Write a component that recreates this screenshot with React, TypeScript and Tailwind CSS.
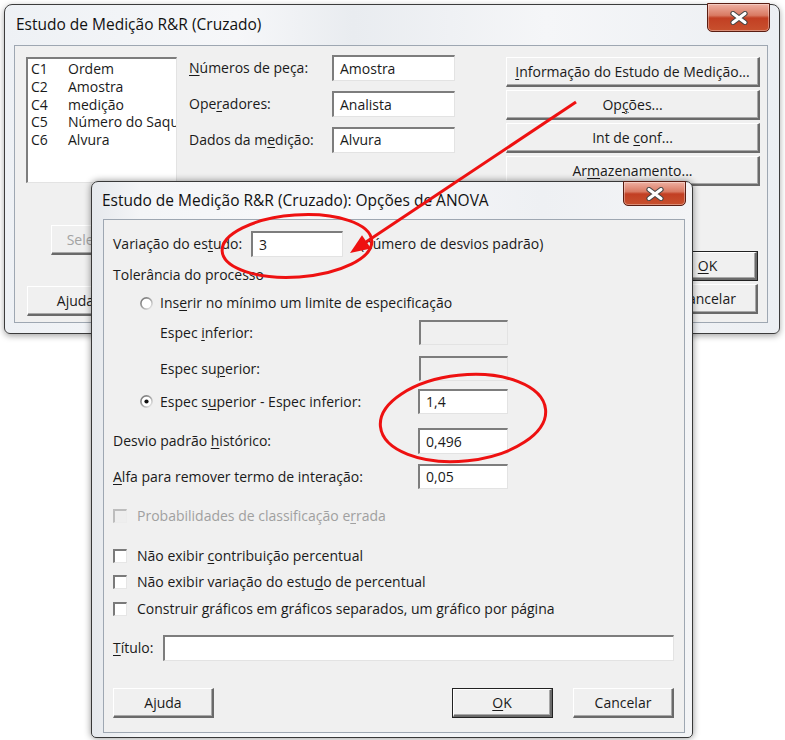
import React from "react";

type Kids = { children?: React.ReactNode };

// access-key underline, as in the classic Windows dialogs
function Key({ children }: Kids) {
  return <span className="underline decoration-1 underline-offset-[2px]">{children}</span>;
}

function TextBox({
  value = "",
  disabled = false,
  className = "",
}: {
  value?: string;
  disabled?: boolean;
  className?: string;
}) {
  return (
    <div
      className={`flex items-center border-t-2 border-l-2 border-r border-b border-t-[#7d7d7d] border-l-[#7d7d7d] border-r-[#e3e3e3] border-b-[#e3e3e3] pl-[6px] ${
        disabled ? "bg-[#f0f0f0]" : "bg-white"
      } ${className}`}
    >
      {value}
    </div>
  );
}

function Btn({
  children,
  isDefault = false,
  className = "",
}: Kids & { isDefault?: boolean; className?: string }) {
  return (
    <div className={`bg-[#f0f0f0] ${isDefault ? "border border-[#222]" : ""} ${className}`}>
      <div className="flex h-full w-full items-center justify-center border-t border-l border-r-2 border-b-2 border-t-white border-l-white border-r-[#6a6a6a] border-b-[#6a6a6a] shadow-[inset_-1px_-1px_0_#a8a8a8]">
        {children}
      </div>
    </div>
  );
}

function Check({ disabled = false }: { disabled?: boolean }) {
  return (
    <div
      className={`h-[14px] w-[14px] shrink-0 border-t-2 border-l-2 border-r border-b ${
        disabled
          ? "border-t-[#bdbdbd] border-l-[#bdbdbd] border-r-[#ececec] border-b-[#ececec] bg-[#eeeeee]"
          : "border-t-[#7a7a7a] border-l-[#7a7a7a] border-r-[#e6e6e6] border-b-[#e6e6e6] bg-white"
      }`}
    />
  );
}

function Radio({ checked = false }: { checked?: boolean }) {
  return (
    <svg width="13" height="13" viewBox="0 0 13 13" className="shrink-0">
      <defs>
        <linearGradient id={checked ? "ringOn" : "ringOff"} x1="0" y1="0" x2="1" y2="1">
          <stop offset="0" stopColor="#6f6f6f" />
          <stop offset="0.55" stopColor="#a9a9a9" />
          <stop offset="1" stopColor="#f4f4f4" />
        </linearGradient>
      </defs>
      <circle cx="6.5" cy="6.5" r="5.6" fill="#fff" stroke={`url(#${checked ? "ringOn" : "ringOff"})`} strokeWidth="1.6" />
      {checked && <circle cx="6.5" cy="6.5" r="2.1" fill="#111" />}
    </svg>
  );
}

function CloseBtn({ className = "" }: { className?: string }) {
  return (
    <div
      className={`flex shrink-0 items-center justify-center rounded-b-[5px] border border-[#5a1d12] bg-[linear-gradient(#eeb0a2,#d97a63_42%,#c23f23_52%,#c8512e)] shadow-[inset_0_0_0_1px_rgba(255,255,255,0.35)] ${className}`}
    >
      <svg width="20" height="14" viewBox="0 0 20 14">
        <path d="M4 2.5 L16 11.5 M16 2.5 L4 11.5" stroke="#444" strokeWidth="5.2" strokeLinecap="round" />
        <path d="M4 2.5 L16 11.5 M16 2.5 L4 11.5" stroke="#fff" strokeWidth="3.2" strokeLinecap="round" />
      </svg>
    </div>
  );
}

const columns = [
  ["C1", "Ordem"],
  ["C2", "Amostra"],
  ["C4", "medição"],
  ["C5", "Número do Saquinho"],
  ["C6", "Alvura"],
];

function MainDialog() {
  return (
    <div className="absolute left-[4px] top-[4px] flex h-[330px] w-[776px] flex-col rounded-t-[8px] rounded-b-[6px] border border-[#3c3c3c] bg-[linear-gradient(90deg,#eef1f5,#f6f7f9_30%,#e9ecf0_45%,#f5f6f8_70%,#eceff3)] shadow-[0_2px_6px_rgba(0,0,0,0.35)]">
      <div className="flex h-[40px] shrink-0 items-start justify-between">
        <span className="ml-[11px] mt-[9px] text-[15.5px] leading-[20px] text-[#111]">
          Estudo de Medição R&R (Cruzado)
        </span>
        <CloseBtn className="mr-[9px] mt-[-2px] h-[29px] w-[63px]" />
      </div>

      <div className="mb-[10px] ml-[9px] mr-[11px] flex flex-1 border border-[#9ea7b2] bg-[#f0f0f0]">
        {/* variables list + lower buttons */}
        <div className="ml-[11px] mt-[11px] flex flex-col">
          <div className="h-[126px] w-[151px] overflow-hidden border-t-2 border-l-2 border-r border-b border-t-[#7d7d7d] border-l-[#7d7d7d] border-r-[#e3e3e3] border-b-[#e3e3e3] bg-white pl-[3px] pt-[1px] leading-[17.8px]">
            {columns.map(([c, name]) => (
              <div key={c} className="flex whitespace-nowrap">
                <span className="w-[37px] shrink-0">{c}</span>
                <span>{name}</span>
              </div>
            ))}
          </div>
          <Btn className="ml-[25px] mt-[42px] h-[30px] w-[100px]">
            <span className="text-[#a3a3a3]">Selecionar</span>
          </Btn>
          <Btn className="ml-[1px] mt-[31px] h-[30px] w-[98px]">Ajuda</Btn>
        </div>

        {/* field assignments */}
        <div className="ml-[12px] mt-[9px] flex w-[266px] flex-col gap-[10px]">
          <div className="flex h-[26px] items-center justify-between">
            <span><Key>N</Key>úmeros de peça:</span>
            <TextBox value="Amostra" className="h-[26px] w-[123px]" />
          </div>
          <div className="flex h-[26px] items-center justify-between">
            <span>Ope<Key>r</Key>adores:</span>
            <TextBox value="Analista" className="h-[26px] w-[123px]" />
          </div>
          <div className="flex h-[25px] items-center justify-between">
            <span>Dados da m<Key>e</Key>dição:</span>
            <TextBox value="Alvura" className="h-[26px] w-[123px]" />
          </div>
        </div>

        {/* sub-dialog buttons */}
        <div className="ml-[51px] mt-[11px] flex w-[254px] flex-col items-end gap-[3px]">
          <Btn className="h-[30px] w-full"><span><Key>I</Key>nformação do Estudo de Medição...</span></Btn>
          <Btn className="h-[30px] w-full"><span>Op<Key>ç</Key>ões...</span></Btn>
          <Btn className="h-[30px] w-full"><span>Int de <Key>c</Key>onf...</span></Btn>
          <Btn className="h-[30px] w-full"><span>Ar<Key>m</Key>azenamento...</span></Btn>
          <Btn isDefault className="mr-[2px] mt-[62px] h-[30px] w-[100px]"><span><Key>O</Key>K</span></Btn>
          <Btn className="mr-[2px] h-[30px] w-[100px]">Cancelar</Btn>
        </div>
      </div>
    </div>
  );
}

function OptionsDialog() {
  return (
    <div className="absolute left-[91px] top-[181px] flex h-[557px] w-[602px] flex-col rounded-t-[7px] rounded-b-[5px] border border-[#383838] bg-[linear-gradient(90deg,#e6e9ed,#f4f5f7_8%,#f7f8fa_40%,#eef0f3_75%,#f3f4f6)] shadow-[0_0_7px_rgba(0,0,0,0.45)]">
      <div className="flex h-[37px] shrink-0 items-start justify-between">
        <span className="ml-[10px] mt-[8px] text-[15.5px] leading-[20px] text-[#111]">
          Estudo de Medição R&R (Cruzado): Opções de ANOVA
        </span>
        <CloseBtn className="mr-[6px] mt-[-1px] h-[25px] w-[63px]" />
      </div>

      <div className="mb-[4px] ml-[11px] mr-[7px] flex flex-1 flex-col border border-[#9ea7b2] bg-[#f0f0f0]">
        <div className="mt-[11px] flex h-[26px] items-center pl-[9px]">
          <span className="w-[138px]">Variação do es<Key>t</Key>udo:</span>
          <TextBox value="3" className="h-[26px] w-[92px]" />
          <span className="ml-[17px]">(número de desvios padrão)</span>
        </div>

        <div className="mt-[8px] flex h-[20px] items-center pl-[9px]">Tolerância do processo</div>

        <div className="mt-[8px] flex h-[20px] items-center gap-[7px] pl-[36px]">
          <Radio />
          <span>Ins<Key>e</Key>rir no mínimo um limite de especificação</span>
        </div>

        <div className="mt-[7px] flex h-[25px] items-center">
          <span className="w-[315px] pl-[56px]">Espec <Key>i</Key>nferior:</span>
          <TextBox disabled className="h-[25px] w-[89px]" />
        </div>

        <div className="mt-[11px] flex h-[25px] items-center">
          <span className="w-[315px] pl-[56px]">Espec su<Key>p</Key>erior:</span>
          <TextBox disabled className="h-[25px] w-[89px]" />
        </div>

        <div className="mt-[8px] flex h-[25px] items-center">
          <div className="flex w-[314px] items-center gap-[7px] pl-[36px]">
            <Radio checked />
            <span>Espec s<Key>u</Key>perior - Espec inferior:</span>
          </div>
          <TextBox value="1,4" className="h-[25px] w-[90px]" />
        </div>

        <div className="mt-[14px] flex h-[26px] items-center">
          <span className="w-[314px] pl-[9px]">Desvio padrão <Key>h</Key>istórico:</span>
          <TextBox value="0,496" className="h-[26px] w-[90px]" />
        </div>

        <div className="mt-[10px] flex h-[25px] items-center">
          <span className="w-[314px] pl-[9px]"><Key>A</Key>lfa para remover termo de interação:</span>
          <TextBox value="0,05" className="h-[25px] w-[90px]" />
        </div>

        <div className="mt-[17px] flex h-[20px] items-center gap-[10px] pl-[9px]">
          <Check disabled />
          <span className="text-[#a0a0a0]">Probabilidades de classificação e<Key>r</Key>rada</span>
        </div>

        <div className="mt-[20px] flex h-[20px] items-center gap-[10px] pl-[9px]">
          <Check />
          <span>Não exibir <Key>c</Key>ontribuição percentual</span>
        </div>
        <div className="mt-[6px] flex h-[20px] items-center gap-[10px] pl-[9px]">
          <Check />
          <span>Não exibir variação do estu<Key>d</Key>o de percentual</span>
        </div>
        <div className="mt-[7px] flex h-[20px] items-center gap-[10px] pl-[9px]">
          <Check />
          <span>Construir <Key>g</Key>ráficos em gráficos separados, um gráfico por página</span>
        </div>

        <div className="mt-[16px] flex h-[26px] items-center pl-[9px] pr-[10px]">
          <span className="w-[50px]"><Key>T</Key>ítulo:</span>
          <TextBox className="h-[26px] flex-1" />
        </div>

        <div className="mt-[27px] flex h-[30px] items-center pl-[9px] pr-[10px]">
          <Btn className="h-[30px] w-[101px]">Ajuda</Btn>
          <Btn isDefault className="ml-auto h-[30px] w-[101px]"><span><Key>O</Key>K</span></Btn>
          <Btn className="ml-[20px] h-[30px] w-[101px]">Cancelar</Btn>
        </div>
      </div>
    </div>
  );
}

// red highlight marks drawn over both windows
function Marks() {
  return (
    <svg className="pointer-events-none absolute left-0 top-0" width="785" height="740" viewBox="0 0 785 740">
      <ellipse cx="297" cy="246" rx="75" ry="31" transform="rotate(-4 297 246)" fill="none" stroke="#ee1111" strokeWidth="3" />
      <ellipse cx="463" cy="418" rx="83" ry="43" transform="rotate(-6 463 418)" fill="none" stroke="#ee1111" strokeWidth="3" />
      <line x1="576" y1="102" x2="366" y2="242" stroke="#ee1111" strokeWidth="3" />
      <polygon points="350,253 371,248.5 362,235.3" fill="#ee1111" />
    </svg>
  );
}

export default function App() {
  return (
    <div className="relative h-[740px] w-[785px] overflow-hidden bg-white font-['Open_Sans',sans-serif] text-[14px] leading-[20px] text-[#1a1a1a]">
      <MainDialog />
      <OptionsDialog />
      <Marks />
    </div>
  );
}
